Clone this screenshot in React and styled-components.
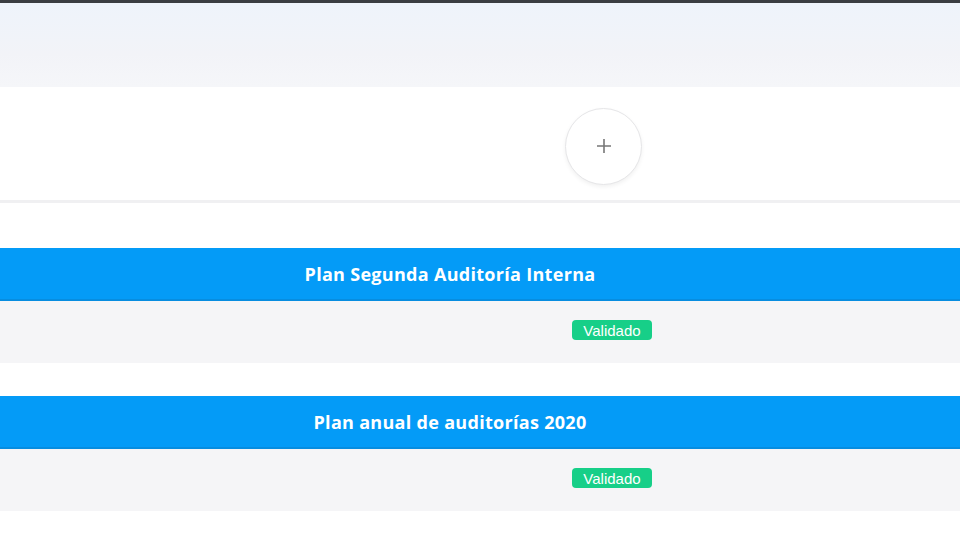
import React from "react";
import styled, { createGlobalStyle } from "styled-components";

const GlobalStyle = createGlobalStyle`
  html, body {
    margin: 0;
    padding: 0;
    background: #ffffff;
    font-family: "Open Sans", "Liberation Sans", sans-serif;
  }
`;

const Page = styled.div`
  width: 960px;
  height: 540px;
  overflow: hidden;
  border-top: 3px solid #3a3d42;
  box-sizing: border-box;
  background: #ffffff;
`;

const Banner = styled.div`
  height: 84px;
  background: linear-gradient(180deg, #eef3fb 0%, #f2f3f8 60%, #f5f6f9 100%);
`;

const AddZone = styled.div`
  height: 116px;
  box-sizing: border-box;
  display: flex;
  align-items: center;
  padding-left: 565px;
  padding-top: 5px;
  border-bottom: 3px solid #f0f0f2;
`;

const AddButton = styled.button`
  width: 77px;
  height: 77px;
  border-radius: 50%;
  border: 1px solid #e6e6e8;
  background: #ffffff;
  box-shadow: 0 2px 4px rgba(0, 0, 0, 0.06);
  display: flex;
  align-items: center;
  justify-content: center;
  padding: 0;
  cursor: pointer;
`;

const Spacer = styled.div`
  height: ${(p) => p.$h}px;
`;

const PlanTitle = styled.div`
  height: 51px;
  background: #049bf7;
  border-bottom: 2px solid #078de0;
  display: flex;
  align-items: center;
  justify-content: center;
  padding-right: 60px;
  color: #ffffff;
  font-weight: 700;
  font-size: 18px;
  letter-spacing: 0.3px;
`;

const PlanBody = styled.div`
  height: 62px;
  background: #f5f5f7;
  display: flex;
  justify-content: center;
  padding-left: 264px;
  padding-top: 19px;
  box-sizing: border-box;
`;

const Badge = styled.span`
  width: 80px;
  height: 20px;
  border-radius: 4px;
  background: #17cf88;
  color: #ffffff;
  font-family: "Liberation Sans", Arial, sans-serif;
  font-size: 15px;
  display: flex;
  align-items: center;
  justify-content: center;
`;

const plans = [
  { title: "Plan Segunda Auditoría Interna", status: "Validado" },
  { title: "Plan anual de auditorías 2020", status: "Validado" },
];

const App = () => {
  return (
    <Page>
      <GlobalStyle />
      <Banner />
      <AddZone>
        <AddButton aria-label="Agregar">
          <svg width="18" height="18" viewBox="0 0 18 18">
            <path d="M9 2v14M2 9h14" stroke="#777" strokeWidth="1.6" />
          </svg>
        </AddButton>
      </AddZone>
      <Spacer $h={45} />
      {plans.map((plan, i) => (
        <React.Fragment key={plan.title}>
          {i > 0 && <Spacer $h={33} />}
          <PlanTitle>{plan.title}</PlanTitle>
          <PlanBody>
            <Badge>{plan.status}</Badge>
          </PlanBody>
        </React.Fragment>
      ))}
    </Page>
  );
};

export default App;
